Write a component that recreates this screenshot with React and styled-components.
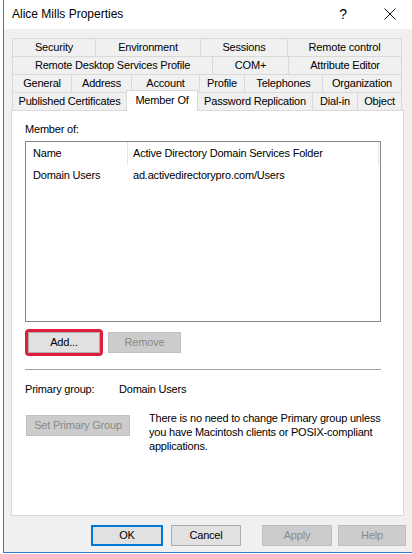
import React from "react";
import styled, { createGlobalStyle } from "styled-components";

const GlobalStyle = createGlobalStyle`
  *, *::before, *::after { box-sizing: border-box; }
  html, body {
    margin: 0;
    padding: 0;
    background: #ffffff;
  }
  body {
    font-family: "Liberation Sans", Arial, sans-serif;
    font-size: 11px;
    letter-spacing: -0.2px;
    color: #000000;
  }
`;

const tabRows = [
  [
    { name: "Security", width: 84 },
    { name: "Environment", width: 105 },
    { name: "Sessions", width: 87 },
    { name: "Remote control", width: 114 },
  ],
  [
    { name: "Remote Desktop Services Profile", width: 201 },
    { name: "COM+", width: 76 },
    { name: "Attribute Editor", width: 113 },
  ],
  [
    { name: "General", width: 60 },
    { name: "Address", width: 60 },
    { name: "Account", width: 68 },
    { name: "Profile", width: 45 },
    { name: "Telephones", width: 78 },
    { name: "Organization", width: 79 },
  ],
  [
    { name: "Published Certificates", width: 115 },
    { name: "Member Of", width: 71, active: true },
    { name: "Password Replication", width: 115 },
    { name: "Dial-in", width: 45 },
    { name: "Object", width: 44 },
  ],
];

const footerButtons = [
  { label: "OK", width: 72, gap: 80, primary: true },
  { label: "Cancel", width: 70, gap: 8 },
  { label: "Apply", width: 70, gap: 21, disabled: true },
  { label: "Help", width: 68, gap: 6, disabled: true },
];

export default function App() {
  return (
    <>
      <GlobalStyle />
      <Window>
        <TitleBar>
          <Title>Alice Mills Properties</Title>
          <TitleControls>
            <HelpGlyph>?</HelpGlyph>
            <svg width="12" height="12" viewBox="0 0 12 12">
              <path d="M0.5 0.5 L11.5 11.5 M11.5 0.5 L0.5 11.5" stroke="#111" strokeWidth="1" fill="none" />
            </svg>
          </TitleControls>
        </TitleBar>

        <Body>
          <TabStrip>
            {tabRows.map((row, i) => (
              <TabRow key={i}>
                {row.map((tab) => (
                  <Tab key={tab.name} $width={tab.width} $active={tab.active}>
                    {tab.name}
                  </Tab>
                ))}
              </TabRow>
            ))}
          </TabStrip>

          <Panel>
            <Label>Member of:</Label>
            <ListBox>
              <ListHeader>
                <HeaderCell>Name</HeaderCell>
                <HeaderCell $divider>Active Directory Domain Services Folder</HeaderCell>
              </ListHeader>
              <ListRow>
                <Cell>Domain Users</Cell>
                <Cell $second>ad.activedirectorypro.com/Users</Cell>
              </ListRow>
            </ListBox>

            <ButtonRow>
              <Button $width={72} $highlight>Add...</Button>
              <Button $width={73} $disabled>Remove</Button>
            </ButtonRow>

            <Separator />

            <InfoRow>
              <InfoLabel>Primary group:</InfoLabel>
              <span>Domain Users</span>
            </InfoRow>

            <PrimaryRow>
              <PrimaryButton $width={104} $disabled>Set Primary Group</PrimaryButton>
              <Note>
                There is no need to change Primary group unless
                <br />
                you have Macintosh clients or POSIX-compliant
                <br />
                applications.
              </Note>
            </PrimaryRow>
          </Panel>

          <Footer>
            {footerButtons.map((b) => (
              <FooterButton
                key={b.label}
                $width={b.width}
                $gap={b.gap}
                $primary={b.primary}
                $disabled={b.disabled}
              >
                {b.label}
              </FooterButton>
            ))}
          </Footer>
        </Body>
      </Window>
    </>
  );
}

const Window = styled.div`
  margin-left: 3px;
  height: 553px;
  border-left: 1px solid #2a7fd4;
  border-bottom: 1px solid #2a7fd4;
  background: #f0f0f0;
  display: flex;
  flex-direction: column;
`;

const TitleBar = styled.div`
  height: 29px;
  background: #ffffff;
  display: flex;
  align-items: center;
  padding: 0 16px 1px 8px;
`;

const Title = styled.div`
  font-size: 12px;
  letter-spacing: 0;
`;

const TitleControls = styled.div`
  margin-left: auto;
  display: flex;
  align-items: center;
  gap: 37px;
`;

const HelpGlyph = styled.span`
  font-size: 14px;
  letter-spacing: 0;
  line-height: 14px;
`;

const Body = styled.div`
  flex: 1;
  padding: 9px 0 0 7px;
  display: flex;
  flex-direction: column;
`;

const TabStrip = styled.div`
  margin-left: 1px;
  display: flex;
  flex-direction: column;
`;

const TabRow = styled.div`
  display: flex;
  height: 18px;
`;

/* neighbouring tabs share a border, so each one after the first is 1px wider */
const Tab = styled.div`
  width: ${(p) => p.$width + 1}px;
  height: ${(p) => (p.$active ? 21 : 18)}px;
  margin-top: ${(p) => (p.$active ? -2 : 0)}px;
  margin-left: -1px;
  &:first-child {
    margin-left: 0;
    width: ${(p) => p.$width}px;
  }
  border: 1px solid #d9d9d9;
  border-bottom: none;
  background: ${(p) => (p.$active ? "#ffffff" : "#f0f0f0")};
  text-align: center;
  line-height: ${(p) => (p.$active ? 18 : 17)}px;
  white-space: nowrap;
  position: relative;
  z-index: ${(p) => (p.$active ? 2 : 0)};
`;

const Panel = styled.div`
  width: 393px;
  height: 406px;
  background: #ffffff;
  border: 1px solid #d9d9d9;
  padding: 11px 0 0 13px;
  display: flex;
  flex-direction: column;
  align-items: flex-start;
`;

const Label = styled.div`
  line-height: 14px;
`;

const ListBox = styled.div`
  margin-top: 5px;
  width: 356px;
  height: 181px;
  border: 1px solid #828790;
  background: #ffffff;
`;

const ListHeader = styled.div`
  display: flex;
  height: 23px;
`;

const HeaderCell = styled.div`
  width: ${(p) => (p.$divider ? 252 : 101)}px;
  padding-left: ${(p) => (p.$divider ? 5 : 7)}px;
  line-height: 23px;
  white-space: nowrap;
  border-left: ${(p) => (p.$divider ? "1px solid #e5e5e5" : "none")};
  border-right: ${(p) => (p.$divider ? "1px solid #e5e5e5" : "none")};
`;

const ListRow = styled.div`
  display: flex;
  margin-top: 2px;
  height: 17px;
  line-height: 17px;
`;

const Cell = styled.div`
  width: ${(p) => (p.$second ? 252 : 101)}px;
  padding-left: ${(p) => (p.$second ? 6 : 7)}px;
  white-space: nowrap;
`;

const ButtonRow = styled.div`
  display: flex;
  gap: 8px;
  margin-top: 10px;
  margin-left: 3px;
`;

const Button = styled.div`
  width: ${(p) => p.$width}px;
  height: 21px;
  line-height: 19px;
  text-align: center;
  white-space: nowrap;
  border: 1px solid ${(p) => (p.$disabled ? "#bfbfbf" : "#adadad")};
  background: ${(p) => (p.$disabled ? "#cccccc" : "#e1e1e1")};
  color: ${(p) => (p.$disabled ? "#8a8a8a" : "#000000")};
  outline: ${(p) => (p.$highlight ? "3px solid #df1f3a" : "none")};
  border-radius: ${(p) => (p.$highlight ? "1px" : "0")};
`;

const Separator = styled.div`
  margin-top: 16px;
  width: 356px;
  height: 1px;
  background: #a0a0a0;
`;

const InfoRow = styled.div`
  display: flex;
  margin-top: 12px;
  line-height: 14px;
`;

const InfoLabel = styled.span`
  width: 94px;
`;

const PrimaryRow = styled.div`
  display: flex;
  align-items: flex-start;
  margin-top: 15px;
`;

const PrimaryButton = styled(Button)`
  margin-top: 4px;
  margin-left: 1px;
`;

const Note = styled.div`
  margin-left: 19px;
  line-height: 14px;
  white-space: nowrap;
`;

const Footer = styled.div`
  display: flex;
  margin-top: 9px;
`;

const FooterButton = styled.div`
  width: ${(p) => p.$width}px;
  height: 21px;
  margin-left: ${(p) => p.$gap}px;
  text-align: center;
  line-height: ${(p) => (p.$primary ? 17 : 19)}px;
  border: ${(p) =>
    p.$primary
      ? "2px solid #0078d7"
      : p.$disabled
      ? "1px solid #bfbfbf"
      : "1px solid #adadad"};
  background: ${(p) => (p.$disabled ? "#cccccc" : "#e1e1e1")};
  color: ${(p) => (p.$disabled ? "#8a8a8a" : "#000000")};
`;
